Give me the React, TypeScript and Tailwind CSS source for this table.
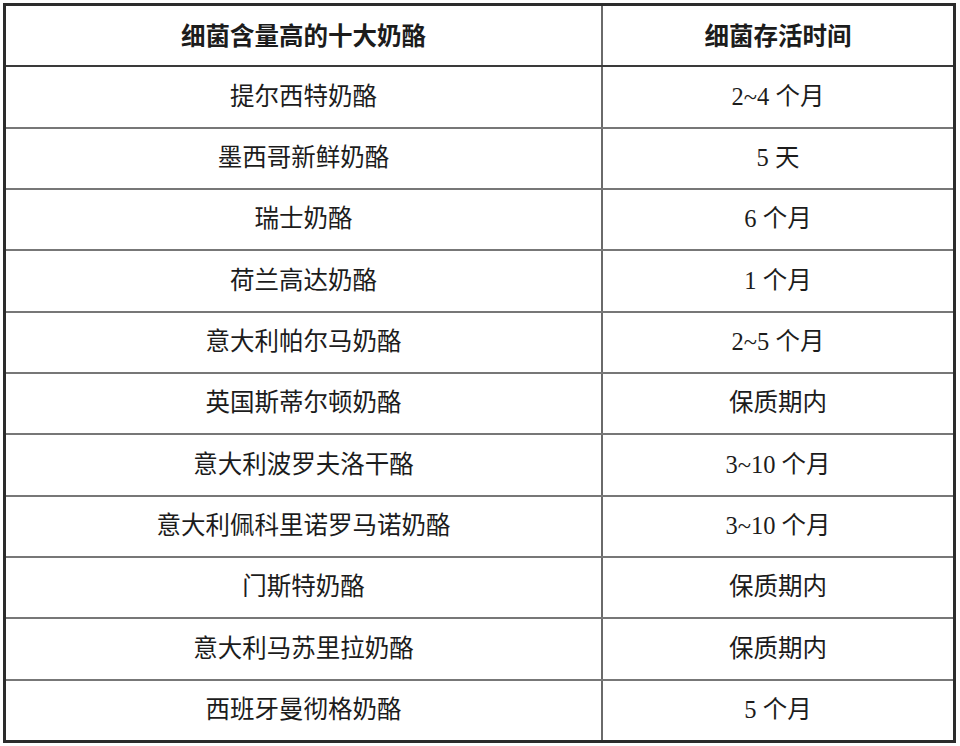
const rows: [string, string][] = [
  ["提尔西特奶酪", "2~4 个月"],
  ["墨西哥新鲜奶酪", "5 天"],
  ["瑞士奶酪", "6 个月"],
  ["荷兰高达奶酪", "1 个月"],
  ["意大利帕尔马奶酪", "2~5 个月"],
  ["英国斯蒂尔顿奶酪", "保质期内"],
  ["意大利波罗夫洛干酪", "3~10 个月"],
  ["意大利佩科里诺罗马诺奶酪", "3~10 个月"],
  ["门斯特奶酪", "保质期内"],
  ["意大利马苏里拉奶酪", "保质期内"],
  ["西班牙曼彻格奶酪", "5 个月"],
];

export default function App() {
  return (
    <div className="w-[960px] h-[746px] bg-white p-[3px]">
      <div className="w-[953px] border-[3px] border-[#2c2c2c] text-[#1c1c1c]">
        {/* header */}
        <div className="flex h-[61.33px] border-b-2 border-[#3a3a3a] font-['Noto_Sans_CJK_SC',sans-serif] font-semibold text-[24.5px]">
          <div className="w-[597px] border-r-2 border-[#6a6a6a] flex items-center justify-center">
            细菌含量高的十大奶酪
          </div>
          <div className="flex-1 flex items-center justify-center">细菌存活时间</div>
        </div>
        {rows.map(([name, time], i) => (
          <div
            key={i}
            className={
              "flex font-['Liberation_Serif','Noto_Sans_CJK_SC',serif] text-[24.5px] " +
              (i < rows.length - 1 ? "h-[61.33px] border-b-2 border-[#777777]" : "h-[59.33px]")
            }
          >
            <div className="w-[597px] border-r-2 border-[#6a6a6a] flex items-center justify-center">
              {name}
            </div>
            <div className="flex-1 flex items-center justify-center">{time}</div>
          </div>
        ))}
      </div>
    </div>
  );
}
